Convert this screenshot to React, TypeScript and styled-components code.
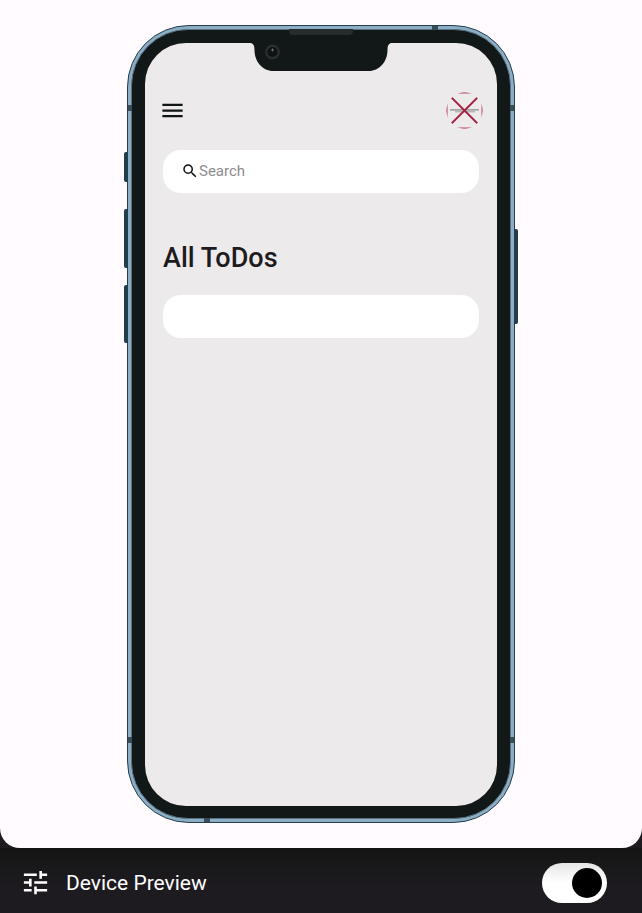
import React, { useState } from "react";
import styled, { createGlobalStyle } from "styled-components";

const GlobalStyle = createGlobalStyle`
  *, *::before, *::after { box-sizing: border-box; }
  body {
    margin: 0;
    background: #1d1b20;
    font-family: Roboto, "Liberation Sans", sans-serif;
    color: #1d1b20;
  }
`;

const Page = styled.div`
  min-height: 100vh;
  display: flex;
  flex-direction: column;
`;

const Stage = styled.main`
  flex: 1;
  display: flex;
  align-items: center;
  justify-content: center;
  padding: 25px 16px;
  background: #fffbff;
  border-radius: 0 0 20px 20px;
`;

const Phone = styled.div`
  position: relative;
  display: flex;
  width: 100%;
  max-width: 388px;
  height: 798px;
  padding: 3px;
  background: #8cadc3;
  border: 1px solid #213f4e;
  border-radius: 62px;
`;

const Bezel = styled.div`
  flex: 1;
  display: flex;
  padding: 13px 13px 12px;
  background: #121717;
  border: 1px solid #587487;
  border-radius: 57px;
`;

const Screen = styled.div`
  position: relative;
  flex: 1;
  padding: 47px 18px 18px;
  background: #eceaeb;
  border-radius: 41px;
`;

const SideButton = styled.span<{ $side: "left" | "right"; $top: number; $length: number }>`
  position: absolute;
  top: ${(p) => p.$top}px;
  ${(p) => p.$side}: -4px;
  width: 3px;
  height: ${(p) => p.$length}px;
  background: #213d4b;
  border-radius: ${(p) => (p.$side === "left" ? "2px 0 0 2px" : "0 2px 2px 0")};
`;

type Edge = "left" | "right" | "top" | "bottom";

const AntennaBand = styled.span<{ $edge: Edge; $at: number }>`
  position: absolute;
  ${(p) => p.$edge}: 0;
  ${(p) =>
    p.$edge === "left" || p.$edge === "right"
      ? `top: ${p.$at}px; width: 4px; height: 6px;`
      : `left: ${p.$at}px; width: 6px; height: 4px;`}
  background: #3a4c55;
`;

const Notch = styled.svg`
  position: absolute;
  top: -14px;
  left: 50%;
  margin-left: -72px;
  width: 144px;
  height: 43px;
`;

const TopBar = styled.header`
  display: flex;
  align-items: center;
  justify-content: space-between;
  height: 40px;
`;

const IconButton = styled.button`
  display: flex;
  padding: 0;
  border: 0;
  background: none;
  color: #111414;
  cursor: pointer;
`;

const MenuButton = styled(IconButton)`
  margin-left: -4px;
`;

const AvatarButton = styled(IconButton)`
  margin-right: -4px;
`;

const SearchBox = styled.label`
  display: flex;
  align-items: center;
  height: 43px;
  margin-top: 20px;
  padding: 0 18px 2px;
  background: #fff;
  border-radius: 18px;
`;

const SearchInput = styled.input`
  flex: 1;
  min-width: 0;
  padding: 0;
  border: 0;
  outline: 0;
  background: none;
  font: 400 15px/20px Roboto, "Liberation Sans", sans-serif;
  color: #1d1b20;
  &::placeholder { color: #8e8d90; opacity: 1; }
`;

const Heading = styled.h1`
  margin: 48px 0 20px;
  font-size: 27px;
  font-weight: 500;
  line-height: 34px;
`;

const TodoList = styled.ul`
  margin: 0;
  padding: 0;
  list-style: none;
`;

const TodoItem = styled.li`
  height: 43px;
  background: #fff;
  border-radius: 18px;
`;

const Toolbar = styled.footer`
  display: flex;
  align-items: center;
  height: 65px;
  padding: 4px 35px 0 20px;
  background: linear-gradient(#141414, #1d1b20 60%);
  color: #fff;
`;

const ToolbarLabel = styled.label`
  flex: 1;
  margin-left: 15px;
  font-size: 21px;
  line-height: 28px;
`;

const Toggle = styled.input`
  appearance: none;
  display: flex;
  align-items: center;
  justify-content: flex-start;
  width: 65px;
  height: 40px;
  margin: 0;
  padding: 5px;
  border-radius: 20px;
  background: linear-gradient(#e6e6e6, #fff 50%);
  cursor: pointer;
  &::before {
    content: "";
    width: 30px;
    height: 30px;
    border-radius: 50%;
    background: #000;
  }
  &:checked { justify-content: flex-end; }
`;

const MenuIcon = () => (
  <svg width="27" height="27" viewBox="0 0 24 24" fill="currentColor" aria-hidden="true">
    <path d="M3 18h18v-2H3v2zm0-5h18v-2H3v2zm0-7v2h18V6H3z" />
  </svg>
);

const SearchIcon = () => (
  <svg width="18" height="18" viewBox="0 0 24 24" fill="#111414" aria-hidden="true">
    <path d="M15.5 14h-.79l-.28-.27A6.47 6.47 0 0 0 16 9.5 6.5 6.5 0 1 0 9.5 16c1.61 0 3.09-.59 4.23-1.57l.27.28v.79l5 4.99L20.49 19l-4.99-5zm-6 0C7.01 14 5 11.99 5 9.5S7.01 5 9.5 5 14 7.01 14 9.5 11.99 14 9.5 14z" />
  </svg>
);

const TuneIcon = () => (
  <svg width="31" height="31" viewBox="0 0 24 24" fill="#fff" aria-hidden="true">
    <path d="M3 17v2h6v-2H3zM3 5v2h10V5H3zm10 16v-2h8v-2h-8v-2h-2v6h2zM7 9v2H3v2h4v2h2V9H7zm14 4v-2H11v2h10zm-6-4h2V7h4V5h-4V3h-2v6z" />
  </svg>
);

const BrokenAvatar = () => (
  <svg width="37" height="37" viewBox="0 0 37 37" aria-hidden="true">
    <clipPath id="avatar-circle">
      <circle cx="18.5" cy="18.5" r="18" />
    </clipPath>
    <g clipPath="url(#avatar-circle)" fill="none">
      <rect x="0.6" y="0.6" width="35.8" height="35.8" stroke="#b01c40" strokeWidth="1.6" />
      <path d="M4 17.8h29" stroke="#8a8a8a" strokeWidth="1.2" />
      <path d="M9 19.8h20" stroke="#a0a0a0" strokeWidth="1" />
      <path d="M5.5 5.5l26 26M31.5 5.5l-26 26" stroke="#a32343" strokeWidth="1.8" />
    </g>
  </svg>
);

const NotchArt = () => (
  <Notch viewBox="0 0 144 43" aria-hidden="true">
    <path
      d="M0 14V12H144V14H143C140 14 138.500 16 138.500 21C138.500 33 130 42 120 42H24C14 42 5.500 33 5.500 21C5.500 16 4 14 1 14Z"
      fill="#121717"
    />
    <path d="M40 0H104V2Q104 6 100 6H44Q40 6 40 2Z" fill="#262b2c" />
    <circle cx="23.500" cy="23" r="6.300" fill="#0e1213" stroke="#292e30" strokeWidth="2.400" />
    <path d="M23.500 19.500v3M22 21h3" stroke="#7b8082" strokeWidth="0.800" />
  </Notch>
);

export default function App() {
  const [preview, setPreview] = useState(true);
  return (
    <>
      <GlobalStyle />
      <Page>
        <Stage>
          <Phone>
            <SideButton $side="left" $top={126} $length={30} />
            <SideButton $side="left" $top={183} $length={59} />
            <SideButton $side="left" $top={259} $length={58} />
            <SideButton $side="right" $top={203} $length={95} />
            <AntennaBand $edge="left" $at={79} />
            <AntennaBand $edge="right" $at={79} />
            <AntennaBand $edge="left" $at={711} />
            <AntennaBand $edge="right" $at={711} />
            <AntennaBand $edge="top" $at={304} />
            <AntennaBand $edge="bottom" $at={76} />
            <Bezel>
              <Screen>
                <NotchArt />
                <TopBar>
                  <MenuButton type="button" aria-label="Menu">
                    <MenuIcon />
                  </MenuButton>
                  <AvatarButton type="button" aria-label="Profile">
                    <BrokenAvatar />
                  </AvatarButton>
                </TopBar>
                <SearchBox>
                  <SearchIcon />
                  <SearchInput type="text" placeholder="Search" aria-label="Search" />
                </SearchBox>
                <Heading>All ToDos</Heading>
                <TodoList>
                  <TodoItem />
                </TodoList>
              </Screen>
            </Bezel>
          </Phone>
        </Stage>
        <Toolbar>
          <TuneIcon />
          <ToolbarLabel htmlFor="device-preview">Device Preview</ToolbarLabel>
          <Toggle
            id="device-preview"
            type="checkbox"
            role="switch"
            checked={preview}
            onChange={(e) => setPreview(e.target.checked)}
          />
        </Toolbar>
      </Page>
    </>
  );
}
